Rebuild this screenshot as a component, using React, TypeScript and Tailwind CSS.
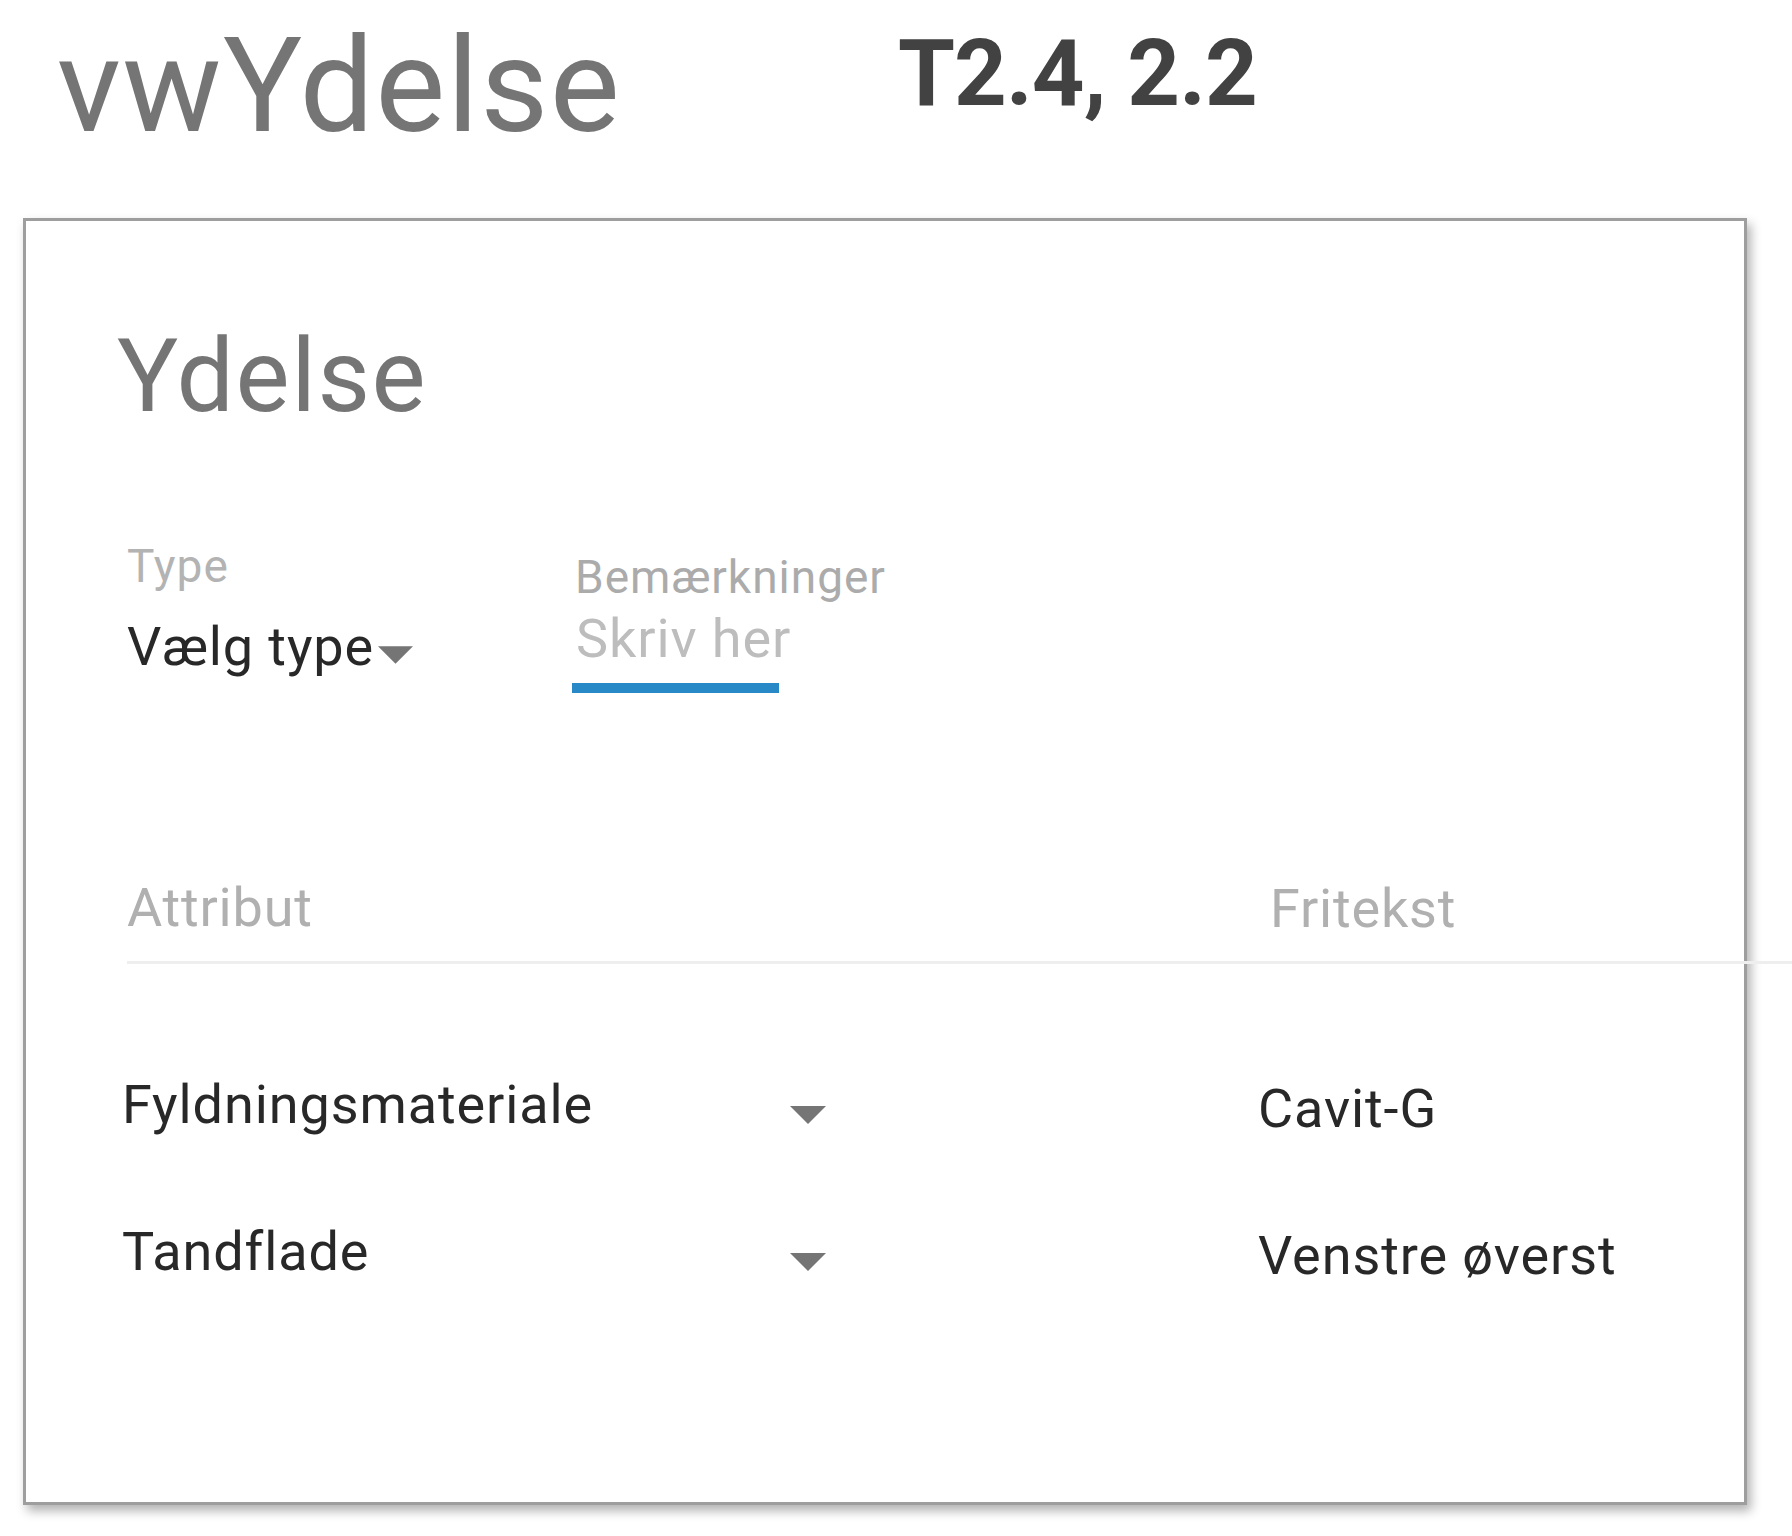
import React from 'react';

const Caret: React.FC<{ className?: string }> = ({ className }) => (
  <svg viewBox="0 0 36 18" className={className}>
    <polygon points="0,0 36,0 18,18" fill="#757575" />
  </svg>
);

const rows = [
  { attr: 'Fyldningsmateriale', value: 'Cavit-G' },
  { attr: 'Tandflade', value: 'Venstre øverst' },
];

export default function App() {
  return (
    <div className="w-[1792px] h-[1536px] bg-white overflow-hidden font-[Roboto,sans-serif]">
      {/* Header */}
      <div className="h-[218px] flex items-start pl-[57px]">
        <div className="w-[841px] mt-[20px] text-[132px] leading-none tracking-[1.4px] text-[#757575]">vwYdelse</div>
        <div className="mt-[28px] text-[92px] leading-none font-bold tracking-[-0.9px] text-[#424242]">T2.4, 2.2</div>
      </div>

      {/* Card */}
      <div className="ml-[23px] w-[1724px] h-[1287px] bg-white border-[3px] border-[#9e9e9e] shadow-[4px_6px_10px_rgba(0,0,0,0.3)]">
        <h1 className="ml-[91px] mt-[104px] text-[102px] leading-none tracking-[1.5px] text-[#757575]">Ydelse</h1>

        {/* Fields */}
        <div className="mt-[116px] flex items-start">
          <div className="ml-[101px] w-[447px] flex flex-col">
            <span className="text-[46px] leading-none tracking-[1px] text-[#b3b3b3]">Type</span>
            <div className="mt-[31px] flex items-start">
              <span className="text-[54px] leading-none tracking-[0.9px] text-[#282828]">Vælg type</span>
              <Caret className="ml-[4px] mt-[26px] w-[35px] h-[18px]" />
            </div>
          </div>
          <div className="mt-[11px] flex flex-col">
            <span className="pl-[1px] text-[46px] leading-none tracking-[1px] text-[#ababab]">Bemærkninger</span>
            <span className="pl-[2px] mt-[12px] text-[54px] leading-none tracking-[0.9px] text-[#bdbdbd]">Skriv her</span>
            <div className="-ml-[2px] mt-[17px] w-[207px] h-[10px] bg-[#2989c7]" />
          </div>
        </div>

        {/* Table header */}
        <div className="mt-[188px] flex items-start">
          <span className="ml-[101px] w-[1143px] text-[54px] leading-none tracking-[0.8px] text-[#b0b0b0]">Attribut</span>
          <span className="mt-[1px] text-[54px] leading-none tracking-[0.8px] text-[#b0b0b0]">Fritekst</span>
        </div>
        <div className="mt-[25px] ml-[101px] w-[1665px] h-[3px] bg-[#eeeeee]" />

        {/* Rows */}
        <div className="mt-[114px] flex flex-col gap-[89px]">
          {rows.map((r) => (
            <div key={r.attr} className="flex items-start">
              <span className="ml-[96px] w-[668px] text-[54px] leading-none tracking-[0.9px] text-[#282828]">{r.attr}</span>
              <Caret className="mt-[28px] w-[36px] h-[18px]" />
              <span className="ml-[432px] mt-[4px] text-[54px] leading-none tracking-[0.9px] text-[#282828]">{r.value}</span>
            </div>
          ))}
        </div>
      </div>
    </div>
  );
}
